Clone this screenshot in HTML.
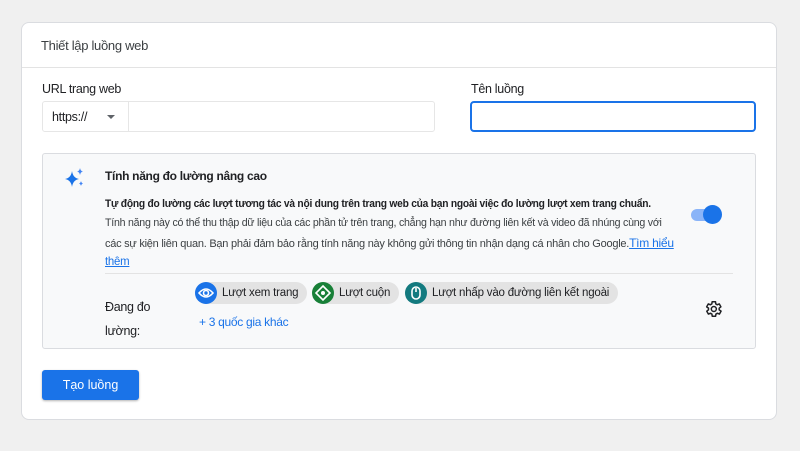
<!DOCTYPE html>
<html><head><meta charset="utf-8"><style>
*{box-sizing:border-box;margin:0;padding:0}
body{width:800px;height:451px;background:#f0f0f0;font-family:"Liberation Sans",sans-serif;color:#202124;position:relative;overflow:hidden}
.card{position:absolute;left:21px;top:22px;width:756px;height:398px;background:#fff;border:1px solid #dadce0;border-radius:8px}
.abs{position:absolute}
.t{font-size:12.5px;letter-spacing:-0.3px}
.ln{position:absolute;left:62px;white-space:nowrap;font-size:11px;letter-spacing:-0.25px;transform:scaleX(0.95);transform-origin:0 0;color:#3c4043}
.chip{position:absolute;height:22px;border-radius:11px;background:#e3e3e3;font-size:11.5px;letter-spacing:-0.2px;line-height:22px;padding-left:27px;padding-right:9px;color:#202124}
.chip i{position:absolute;left:0;top:0;width:22px;height:22px;border-radius:11px}
</style></head><body>
<div class="card">
 <div class="abs t" style="left:19px;top:15px;font-size:13px;color:#3c4043">Thiết lập luồng web</div>
 <div class="abs" style="left:0;top:44px;width:754px;height:1px;background:#e3e3e3"></div>
 <div class="abs t" style="left:20px;top:59px">URL trang web</div>
 <div class="abs" style="left:20px;top:78px;width:393px;height:31px;border:1px solid #e6e6e6;border-radius:3px"></div>
 <div class="abs" style="left:106px;top:79px;width:1px;height:29px;background:#e6e6e6"></div>
 <div class="abs t" style="left:30px;top:87px">https://</div>
 <div class="abs" style="left:85px;top:92px;width:0;height:0;border-left:4px solid transparent;border-right:4px solid transparent;border-top:4px solid #5f6368"></div>
 <div class="abs t" style="left:449px;top:59px">Tên luồng</div>
 <div class="abs" style="left:448px;top:78px;width:286px;height:31px;border:2px solid #1a73e8;border-radius:4px"></div>
 <div class="abs" style="left:20px;top:130px;width:714px;height:196px;background:#f8f9fa;border:1px solid #dadce0;border-radius:3px;overflow:hidden">
  <svg class="abs" style="left:21px;top:13px" width="22" height="22" viewBox="0 0 22 22"><path d="M8 4 Q9 11 15 12 Q9 13 8 20 Q7 13 1 12 Q7 11 8 4Z" fill="#1a73e8"/><path d="M16 1 Q16.5 4 19 4.5 Q16.5 5 16 8 Q15.5 5 13 4.5 Q15.5 4 16 1Z" fill="#4285f4"/><path d="M17 14 Q17.4 16 19 16.5 Q17.4 17 17 19 Q16.6 17 15 16.5 Q16.6 16 17 14Z" fill="#4285f4"/></svg>
  <div class="abs t" style="left:62px;top:15px;font-weight:bold;font-size:12px">Tính năng đo lường nâng cao</div>
  <div class="ln" style="top:44px;font-weight:bold;color:#202124;transform:scaleX(0.93)">Tự động đo lường các lượt tương tác và nội dung trên trang web của bạn ngoài việc đo lường lượt xem trang chuẩn.</div>
  <div class="ln" style="top:63px;transform:scaleX(0.965)">Tính năng này có thể thu thập dữ liệu của các phần tử trên trang, chẳng hạn như đường liên kết và video đã nhúng cùng với</div>
  <div class="ln" style="top:82px;transform:scaleX(1.0)">các sự kiện liên quan. Bạn phải đảm bảo rằng tính năng này không gửi thông tin nhận dạng cá nhân cho Google.<span style="color:#1a73e8;text-decoration:underline;font-size:12px">Tìm hiểu</span></div>
  <div class="ln" style="top:100px;color:#1a73e8;text-decoration:underline;font-size:12px">thêm</div>
  <div class="abs" style="left:648px;top:55px;width:28px;height:12px;border-radius:6px;background:#8ab4f8"></div>
  <div class="abs" style="left:660px;top:51px;width:19px;height:19px;border-radius:50%;background:#1a73e8"></div>
  <div class="abs" style="left:62px;top:119px;width:628px;height:1px;background:#e3e3e3"></div>
  <div class="abs t" style="left:62px;top:141px;line-height:24px">Đang đo<br>lường:</div>
  <div class="chip" style="left:152px;top:128px"><i style="background:#1a73e8"><svg width="22" height="22" viewBox="0 0 22 22"><path d="M4 11 Q11 3 18 11 Q11 19 4 11Z" fill="none" stroke="#fff" stroke-width="1.6"/><circle cx="11" cy="11" r="2.5" fill="none" stroke="#fff" stroke-width="1.6"/></svg></i>Lượt xem trang</div>
  <div class="chip" style="left:269px;top:128px"><i style="background:#188038"><svg width="22" height="22" viewBox="0 0 22 22"><path d="M11 4 L18 11 L11 18 L4 11Z" fill="none" stroke="#fff" stroke-width="1.6"/><circle cx="11" cy="11" r="2" fill="#fff"/></svg></i>Lượt cuộn</div>
  <div class="chip" style="left:362px;top:128px"><i style="background:#137a7f"><svg width="22" height="22" viewBox="0 0 22 22"><rect x="7" y="5" width="8" height="12" rx="4" fill="none" stroke="#fff" stroke-width="1.6"/><path d="M11 6v4" stroke="#fff" stroke-width="1.6"/></svg></i>Lượt nhấp vào đường liên kết ngoài</div>
  <div class="abs t" style="left:156px;top:161px;color:#1a73e8;font-size:12px">+ 3 quốc gia khác</div>
  <svg class="abs" style="left:660px;top:145px" width="20" height="20" viewBox="0 0 24 24"><path d="M19.4 13a7.5 7.5 0 0 0 0-2l2.1-1.6-2-3.5-2.5 1a7.6 7.6 0 0 0-1.7-1L15 3.3h-4l-.4 2.6a7.6 7.6 0 0 0-1.7 1l-2.5-1-2 3.5L6.6 11a7.5 7.5 0 0 0 0 2l-2.1 1.6 2 3.5 2.5-1a7.6 7.6 0 0 0 1.7 1l.4 2.6h4l.4-2.6a7.6 7.6 0 0 0 1.7-1l2.5 1 2-3.5z" fill="none" stroke="#202124" stroke-width="1.8" stroke-linejoin="round"/><circle cx="13" cy="12" r="3" fill="none" stroke="#202124" stroke-width="1.8"/></svg>
 </div>
 <div class="abs" style="left:20px;top:347px;width:97px;height:30px;background:#1a73e8;border-radius:3px;color:#fff;font-size:12.5px;text-align:center;line-height:30px;box-shadow:0 1px 2px rgba(0,0,0,.3)">Tạo luồng</div>
</div>
</body></html>
